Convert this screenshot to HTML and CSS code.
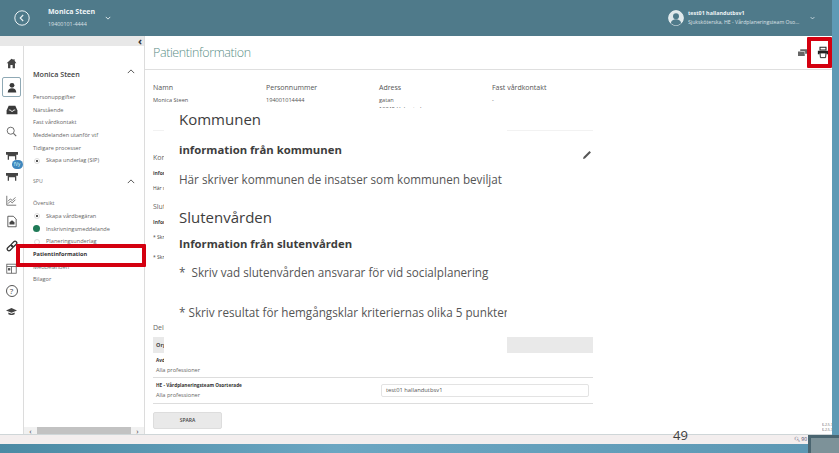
FILE: index.html
```html
<!DOCTYPE html>
<html lang="sv">
<head>
<meta charset="utf-8">
<title>Patientinformation</title>
<link rel="stylesheet" href="styles.css">
</head>
<body>
<div class="app">
  <header class="topbar">
    <div class="top-left">
      <span class="back"><svg viewBox="0 0 16 16" width="16" height="16"><circle cx="8" cy="8" r="7.2" fill="none" stroke="#eef4f6" stroke-width="1"/><path d="M9.2 5 6.2 8l3 3" fill="none" stroke="#eef4f6" stroke-width="1.1"/></svg></span>
      <div class="who"><b>Monica Steen</b><small>19400101-4444</small></div>
      <svg class="caret" viewBox="0 0 8 5" width="6" height="4"><path d="M1 1l3 3 3-3" fill="none" stroke="#e6eef1" stroke-width="1.2"/></svg>
    </div>
    <div class="top-right">
      <svg viewBox="0 0 16 16" width="16" height="16"><circle cx="8" cy="8" r="7.4" fill="#dfe8eb" stroke="#f3f7f8" stroke-width=".8"/><circle cx="8" cy="6.2" r="3" fill="#4f7a8a"/><path d="M2.8 13.3c.6-3 2.6-4 5.2-4s4.6 1 5.2 4a7.4 7.4 0 0 1-10.4 0z" fill="#4f7a8a"/></svg>
      <div class="who user"><b>test01 hallandutbsv1</b><small>Sjuksköterska, HE - Vårdplaneringsteam Oso…</small></div>
      <svg class="caret" viewBox="0 0 8 5" width="5" height="4"><path d="M1 1l3 3 3-3" fill="none" stroke="#e6eef1" stroke-width="1.2"/></svg>
    </div>
  </header>

  <div class="workspace">
    <aside class="left">
      <div class="collapse"><span>‹</span></div>
      <div class="left-body">
        <nav class="rail">
          <svg viewBox="0 0 14 14" width="11" height="11"><path d="M7 1 .8 6.800h1.800V13h3V9h2.800v4h3V6.800h1.800L11 3.500V1.500H9.500v.7z" fill="#444"/></svg>
          <span class="rail-on"><svg viewBox="0 0 14 16" width="10" height="13"><circle cx="7" cy="5" r="3.400" fill="#3a3a3a"/><path d="M1 15c0-4 2.500-6 6-6s6 2 6 6z" fill="#3a3a3a"/></svg></span>
          <svg viewBox="0 0 14 12" width="12" height="10"><path d="M3 1h8l2.500 5.500V11h-13V6.500z" fill="#3a3a3a"/><path d="M3.200 6h2l.8 1.500h2.200L9 6h2" fill="none" stroke="#fff" stroke-width="1"/></svg>
          <svg viewBox="0 0 14 14" width="11" height="11"><circle cx="6" cy="6" r="4.500" fill="none" stroke="#666" stroke-width="1.200"/><path d="m9.500 9.500 3.500 3.500" stroke="#666" stroke-width="1.400"/></svg>
          <svg viewBox="0 0 14 10" width="12" height="9"><path d="M0 1h14v3H12v6h-1.500V6h-7v4H2V4H0z" fill="#444"/></svg>
          <span class="rail-badged"><i class="badge">fVy</i><svg viewBox="0 0 14 10" width="12" height="9"><path d="M0 1h14v3H12v6h-1.500V6h-7v4H2V4H0z" fill="#444"/></svg></span>
          <svg viewBox="0 0 14 14" width="11" height="11"><path d="M1 1v12h12" fill="none" stroke="#555"/><path d="m2.500 8 3-3 2.500 2 4-4M2.500 11l3-3 2.500 2 4-4" fill="none" stroke="#555"/></svg>
          <svg viewBox="0 0 12 14" width="10" height="13"><path d="M1 .700h6.500L11 4v9.300H1z" fill="none" stroke="#444"/><path d="M3 10.500h6V8L6 5.500 3 8z" fill="#444"/></svg>
          <svg viewBox="0 0 14 14" width="12" height="12"><g transform="rotate(-45 7 7)" fill="none" stroke="#333" stroke-width="1.500"><rect x="0" y="5" width="7.500" height="4" rx="2"/><rect x="6.500" y="5" width="7.500" height="4" rx="2"/></g></svg>
          <svg viewBox="0 0 14 14" width="11" height="11"><rect x="1" y="1.500" width="12" height="11.500" fill="none" stroke="#555"/><path d="M1 4.500h12M7 4.500V13" stroke="#555"/><rect x="2.500" y="6.500" width="3" height="3" fill="#555"/></svg>
          <span class="help">?</span>
          <svg viewBox="0 0 14 10" width="11" height="8"><path d="M7 0 14 3 7 6 0 3z" fill="#444"/><path d="M3 5.500V8c1.500 1.300 6.500 1.300 8 0V5.500L7 7.300z" fill="#444"/></svg>
        </nav>
        <div class="menu">
          <div class="menu-scroll">
            <div class="menu-head"><strong>Monica Steen</strong><svg viewBox="0 0 10 6" width="8" height="5"><path d="m1 5 4-4 4 4" fill="none" stroke="#444" stroke-width="1.100"/></svg></div>
            <ul class="links first">
              <li>Personuppgifter</li>
              <li>Närstående</li>
              <li>Fast vårdkontakt</li>
              <li>Meddelanden utanför vtf</li>
              <li>Tidigare processer</li>
              <li class="step"><i class="dot"></i>Skapa underlag (SIP)</li>
            </ul>
            <div class="menu-head spu"><span>SPU</span><svg viewBox="0 0 10 6" width="8" height="5"><path d="m1 5 4-4 4 4" fill="none" stroke="#444" stroke-width="1.100"/></svg></div>
            <ul class="links second">
              <li>Översikt</li>
              <li class="step"><i class="dot"></i>Skapa vårdbegäran</li>
              <li class="step"><i class="dot green"></i>Inskrivningsmeddelande</li>
              <li class="step"><i class="dot blank"></i>Planeringsunderlag</li>
              <li class="current">Patientinformation</li>
              <li class="after-current">Meddelanden</li>
              <li>Bilagor</li>
            </ul>
          </div>
          <div class="hscroll"><span>‹</span><i></i><span>›</span></div>
        </div>
      </div>
    </aside>

    <main class="main">
      <div class="title-row">
        <h1>Patientinformation</h1>
        <div class="tools">
          <svg viewBox="0 0 12 10" width="9" height="8"><path d="M3 0h9v6H9v3H0V3h3z" fill="#666"/><path d="M3 3h6v3" fill="none" stroke="#fff" stroke-width=".8"/></svg>
          <svg viewBox="0 0 14 14" width="12" height="13"><path d="M3.500 1h7v3h-7z" fill="none" stroke="#222" stroke-width="1.200"/><path d="M1 5h12v4h-2V7.500H3V9H1z" fill="#222"/><path d="M3.500 7.500h7L10 13H4z" fill="none" stroke="#222" stroke-width="1.100"/></svg>
        </div>
      </div>
      <div class="content">
        <div class="facts">
          <div><h4>Namn</h4><p>Monica Steen</p></div>
          <div><h4>Personnummer</h4><p>194001014444</p></div>
          <div><h4>Adress</h4><p>gatan<br>12345 Halmstad</p></div>
          <div><h4>Fast vårdkontakt</h4><p>-</p></div>
        </div>
        <div class="under">
          <h4>Kommunen</h4>
          <h6>information från kommunen</h6>
          <p>Här skriver kommunen</p>
          <h4 class="gap">Slutenvården</h4>
          <h6>Information från slutenvården</h6>
          <p>* Skriv vad</p>
          <p class="gap-s">* Skriv resultat</p>
        </div>
        <section class="share">
          <h4>Delning</h4>
          <div class="share-head"><b>Org</b></div>
          <div class="share-row row-a"><div><b>Avd</b><span>Alla professioner</span></div></div>
          <div class="share-row"><div><b>HE - Vårdplaneringsteam Osorterade</b><span>Alla professioner</span></div><div class="field">test01 hallandutbsv1</div></div>
          <button class="save" type="button">SPARA</button>
        </section>
      </div>
    </main>
  </div>

  <footer class="status"><span class="zoom">🔍︎ 90</span></footer>
  <div class="bottom"></div>
</div>

<div class="slide">
  <h2>Kommunen</h2>
  <h3>information från kommunen</h3>
  <p class="s1">Här skriver kommunen de insatser som kommunen beviljat</p>
  <h2 class="s2">Slutenvården</h2>
  <h3>Information från slutenvården</h3>
  <p class="s3">*&nbsp; Skriv vad slutenvården ansvarar för vid socialplanering</p>
  <p class="s4">* Skriv resultat för hemgångsklar kriteriernas olika 5 punkter</p>
</div>
<svg class="pencil" viewBox="0 0 12 12" width="10" height="10"><path d="M1.300 10.700l.5-2.200L9 1.300l1.700 1.700-7.200 7.200z" fill="#555"/></svg>
<div class="mark mark-nav"></div>
<div class="mark mark-print"></div>
<span class="page-no">49</span>
<div class="corner"></div>
<div class="version">6.2.5.7<br>6.2.5.7</div>
</body>
</html>
```
FILE: styles.css
```css
* { box-sizing: border-box; }
html, body { margin: 0; height: 100%; }
body { width: 839px; height: 453px; overflow: hidden; position: relative; font-family: "Open Sans", "Noto Sans", sans-serif; color: #444; background: #5f9ab5; }
ul { list-style: none; margin: 0; padding: 0; }
h1, h2, h3, h4, h6, p { margin: 0; font-weight: 400; }

.app { display: flex; flex-direction: column; height: 453px; }
.topbar { height: 36px; flex: none; margin-right: 7px; background: #4f7a8a; display: flex; justify-content: space-between; align-items: center; color: #eef4f6; }
.top-left { display: flex; align-items: center; padding-left: 14px; }
.back { display: flex; margin-right: 18px; }
.who { display: flex; flex-direction: column; line-height: 11px; }
.who b { font-size: 7px; font-weight: 700; }
.who small { font-size: 5.400px; margin-top: 2px; opacity: .85; }
.top-left .caret { margin: 0 0 0 10px; }
.top-right { display: flex; align-items: center; padding-right: 17px; }
.user { margin-left: 4px; width: 122px; white-space: nowrap; }
.who.user b { font-size: 5.400px; line-height: 9px; }
.who.user small { font-size: 5.200px; line-height: 9px; margin-top: 0; }

.workspace { flex: none; height: 398px; display: flex; margin-right: 7px; background: #fff; }
.left { width: 145px; flex: none; display: flex; flex-direction: column; border-right: 1px solid #dcdcdc; }
.collapse { height: 10px; background: #e8e8e8; display: flex; justify-content: flex-end; align-items: center; padding-right: 2px; font-size: 11px; font-weight: 700; line-height: 10px; color: #333; }
.left-body { flex: 1; display: flex; min-height: 0; }
.rail { width: 24px; flex: none; border-right: 1px solid #dcdcdc; display: flex; flex-direction: column; align-items: center; padding-top: 12px; }
.rail > svg, .rail > span { flex: none; }
.rail > svg:nth-child(1) { margin-bottom: 8px; }
.rail-on { width: 19px; height: 20px; border: 1px solid #8fa9b5; border-radius: 2px; display: flex; align-items: center; justify-content: center; margin-bottom: 8px; }
.rail > svg:nth-child(3) { margin-bottom: 11px; }
.rail > svg:nth-child(4) { margin-bottom: 14px; }
.rail > svg:nth-child(5) { margin-bottom: 12px; }
.rail-badged { position: relative; display: flex; margin-bottom: 14px; }
.badge { position: absolute; left: 6px; top: -12px; width: 11px; height: 9px; border-radius: 5px; background: #3f87bd; color: #dff; font-size: 4.500px; line-height: 9px; text-align: center; font-style: normal; }
.rail > svg:nth-child(7) { margin-bottom: 9px; }
.rail > svg:nth-child(8) { margin-bottom: 12px; }
.rail > svg:nth-child(9) { margin-bottom: 11px; }
.rail > svg:nth-child(10) { margin-bottom: 11px; }
.help { width: 12px; height: 12px; border: 1px solid #555; border-radius: 50%; font-size: 8px; line-height: 10px; text-align: center; margin-bottom: 11px; }

.menu { flex: 1; min-width: 0; display: flex; flex-direction: column; }
.menu-scroll { flex: 1; min-height: 0; padding-top: 21px; }
.menu-head { display: flex; justify-content: space-between; align-items: center; padding: 0 9px 0 9px; height: 14px; }
.menu-head strong { font-size: 7.200px; font-weight: 600; color: #444; }
.menu-head svg { margin-top: -5px; }
.spu { margin-top: 9px; height: 10px; }
.spu span { font-size: 5.200px; color: #777; }
.spu svg { margin-top: 0; }
.links { font-size: 5.600px; color: #666; }
.links li { height: 12.700px; line-height: 12.700px; padding-left: 9px; white-space: nowrap; }
.links.first { margin-top: 10px; }
.links.second { margin-top: 11px; }
.links .step { display: flex; align-items: center; }
.dot { width: 6px; height: 6px; border-radius: 50%; border: 1px solid #ddd; margin: 0 6px 0 1px; position: relative; flex: none; background: radial-gradient(circle, #555 0 1px, #fff 1.300px); }
.dot.green { width: 7px; height: 7px; border: 0; background: #1f7a57; margin-left: 0; margin-right: 6px; }
.dot.blank { background: #fff; }
.links .current { background: #fff; font-weight: 700; color: #333; height: 12px; line-height: 12px; }
.links .after-current { padding-top: 1px; }
.hscroll { height: 7px; display: flex; align-items: center; background: #f1f1f1; font-size: 8px; line-height: 7px; color: #444; }
.hscroll span { width: 13px; text-align: center; flex: none; }
.hscroll i { flex: 1; height: 7px; background: #c2c2c2; }

.main { flex: 1; min-width: 0; display: flex; flex-direction: column; }
.title-row { height: 34px; border-bottom: 1px solid #dfdfdf; display: flex; justify-content: space-between; align-items: center; padding: 0 3px 0 8px; flex: none; }
h1 { font-size: 12.500px; font-weight: 300; letter-spacing: -.4px; color: #5b8f88; }
.tools { display: flex; align-items: center; gap: 10px; }
.content { padding: 12px 9px 0 8px; flex: 1; min-height: 0; }
.facts { display: grid; grid-template-columns: 113px 113px 113px 113px; height: 23px; width: 452px; }
.facts h4 { font-size: 7px; line-height: 11px; color: #555; }
.facts p { font-size: 5.600px; line-height: 9px; margin-top: 3px; color: #555; }
.under { margin-top: 25px; height: 192px; padding-top: 22px; border-top: 1px solid #f2f2f2; width: 440px; }
.under h4 { font-size: 7px; line-height: 10px; color: #666; }
.under h6 { font-size: 5px; line-height: 8px; font-weight: 700; margin-top: 6px; }
.under p { font-size: 5px; line-height: 8px; margin-top: 7px; }
.under .gap { margin-top: 10px; }
.under .gap-s { margin-top: 12px; }
.share { width: 440px; }
.share h4 { font-size: 7px; line-height: 11px; color: #666; }
.share-head { margin-top: 4px; height: 16px; background: #e9e9e9; font-size: 5.500px; line-height: 16px; padding-left: 3px; }
.share-row { height: 26px; border-bottom: 1px solid #ddd; display: flex; align-items: center; padding: 0 3px; justify-content: space-between; }
.share-row.row-a { height: 25px; }
.share-row b, .share-row span { display: block; }
.share-row b { font-size: 4.700px; line-height: 9px; color: #333; }
.share-row span { font-size: 5.600px; line-height: 9px; color: #666; margin-top: 1px; }
.field { width: 208px; height: 13px; border: 1px solid #e3e3e3; border-radius: 2px; font-size: 5.800px; line-height: 11px; padding-left: 4px; margin-right: 1px; color: #555; }
.save { display: block; margin-top: 8px; width: 69px; height: 17px; background: #e9e9e9; border: 1px solid #ddd; border-radius: 2px; font: 600 5px/15px "Open Sans", sans-serif; color: #444; padding: 0; }

.status { height: 10px; flex: none; margin-right: 7px; background: #f3eeee; border-top: 1px solid #cfd6d8; display: flex; justify-content: flex-end; }
.zoom { font-size: 5px; line-height: 8px; margin-right: 25px; color: #446; }
.bottom { flex: 1; background: linear-gradient(90deg, #4b8aa4 0, #6ba6c2 40%, #5c97b3 100%); }

.slide { position: absolute; left: 164px; top: 108px; width: 343px; height: 255px; background: #fff; color: #404040; white-space: nowrap; overflow: hidden; padding-left: 15px; }
.slide h2 { font-size: 15px; line-height: 22px; color: #3d3d3d; }
.slide h3 { font-size: 11.300px; line-height: 16px; font-weight: 700; color: #3d3d3d; margin-top: 12px; }
.slide .s1 { font-size: 11.700px; line-height: 16px; margin-top: 13px; color: #555; }
.slide .s2 { margin-top: 19px; }
.slide .s2 + h3 { margin-top: 8px; }
.slide .s3 { font-size: 11.700px; line-height: 16px; margin-top: 12px; color: #555; }
.slide .s4 { font-size: 11.700px; line-height: 16px; margin-top: 24px; color: #555; }
.pencil { position: absolute; left: 582px; top: 150px; }

.mark { position: absolute; border: 4px solid #d40010; border-radius: 1px; }
.mark-nav { left: 16px; top: 244px; width: 130px; height: 23px; }
.mark-print { left: 807px; top: 37px; width: 25px; height: 31px; }
.page-no { position: absolute; left: 673px; top: 428px; font-size: 13px; line-height: 15px; color: #404040; }
.corner { position: absolute; left: 808px; top: 435px; width: 31px; height: 18px; background: #7d9299; border-top: 3px solid #4a6570; border-left: 3px solid #4a6570; }
.version { position: absolute; left: 822px; top: 422px; width: 10px; font-size: 3.500px; line-height: 5px; color: #666; overflow: hidden; white-space: nowrap; }
```
